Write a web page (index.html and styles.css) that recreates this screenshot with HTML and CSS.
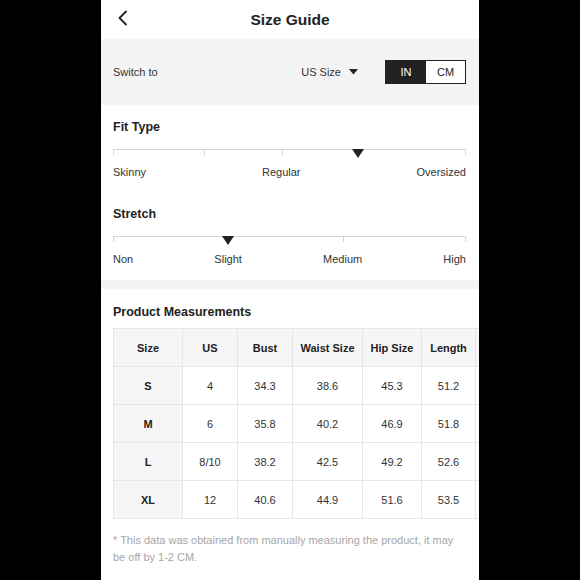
FILE: index.html
```html
<!DOCTYPE html>
<html>
<head>
<meta charset="utf-8">
<link rel="stylesheet" href="styles.css">
</head>
<body>
<div class="panel">
  <header class="topbar">
    <svg class="back" width="12" height="16" viewBox="0 0 12 16"><path d="M9 1.5 L2.5 8 L9 14.5" fill="none" stroke="#222" stroke-width="1.8" stroke-linecap="round" stroke-linejoin="round"/></svg>
    <h1 class="title">Size Guide</h1>
  </header>

  <section class="switchbar">
    <span class="switch-label">Switch to</span>
    <span class="sizesel">US Size <svg width="9" height="6" viewBox="0 0 9 6"><path d="M0 0 H9 L4.5 5.5 Z" fill="#222"/></svg></span>
    <div class="toggle">
      <span class="tog on">IN</span>
      <span class="tog">CM</span>
    </div>
  </section>

  <section class="fit">
    <h2 class="heading">Fit Type</h2>
    <div class="track">
      <i class="tick" style="left:0"></i>
      <i class="tick" style="left:91px"></i>
      <i class="tick" style="left:169px"></i>
      <i class="tick" style="right:0"></i>
      <b class="marker" style="left:245px"></b>
    </div>
    <div class="labels">
      <span>Skinny</span><span>Regular</span><span>Oversized</span>
    </div>

    <h2 class="heading stretch-h">Stretch</h2>
    <div class="track">
      <i class="tick" style="left:0"></i>
      <i class="tick" style="left:230px"></i>
      <i class="tick" style="right:0"></i>
      <b class="marker" style="left:115px"></b>
    </div>
    <div class="labels">
      <span>Non</span><span>Slight</span><span>Medium</span><span>High</span>
    </div>
  </section>

  <div class="sep"></div>

  <section class="measure">
    <h2 class="heading">Product Measurements</h2>
    <div class="tablewrap">
      <table class="sizes">
        <colgroup>
          <col class="c1"><col class="c2"><col class="c3"><col class="c4"><col class="c5"><col class="c6"><col class="c7">
        </colgroup>
        <thead>
          <tr><th>Size</th><th>US</th><th>Bust</th><th>Waist Size</th><th>Hip Size</th><th>Length</th><th></th></tr>
        </thead>
        <tbody>
          <tr><th>S</th><td>4</td><td>34.3</td><td>38.6</td><td>45.3</td><td>51.2</td><td></td></tr>
          <tr><th>M</th><td>6</td><td>35.8</td><td>40.2</td><td>46.9</td><td>51.8</td><td></td></tr>
          <tr><th>L</th><td>8/10</td><td>38.2</td><td>42.5</td><td>49.2</td><td>52.6</td><td></td></tr>
          <tr><th>XL</th><td>12</td><td>40.6</td><td>44.9</td><td>51.6</td><td>53.5</td><td></td></tr>
        </tbody>
      </table>
    </div>
    <p class="note">* This data was obtained from manually measuring the product, it may be off by 1-2 CM.</p>
  </section>
</div>
</body>
</html>
```

FILE: styles.css
```css
html, body {
  margin: 0;
  padding: 0;
  background: #000;
  height: 580px;
  overflow: hidden;
}
.panel {
  margin-left: 101px;
  width: 378px;
  height: 580px;
  background: #fff;
  overflow: hidden;
  font-family: "Liberation Sans", Arial, sans-serif;
  color: #222;
}
.topbar {
  height: 39px;
  display: flex;
  align-items: center;
  justify-content: center;
  position: relative;
}
.back {
  position: absolute;
  left: 16px;
  top: 10px;
}
.title {
  margin: 0;
  font-size: 15.5px;
  font-weight: bold;
  color: #222;
}
.switchbar {
  height: 66px;
  background: #f4f4f4;
  display: flex;
  align-items: center;
  padding: 0 13px 0 12px;
  font-size: 11px;
  color: #333;
}
.switch-label {
  flex: 1;
}
.sizesel {
  display: flex;
  align-items: center;
  gap: 8px;
  margin-right: 27px;
}
.toggle {
  display: flex;
  border: 1px solid #222;
  width: 79px;
  height: 22px;
}
.tog {
  flex: 1;
  display: flex;
  align-items: center;
  justify-content: center;
  background: #fff;
  color: #222;
}
.tog.on {
  flex: 0 0 40px;
  background: #222;
  color: #fff;
}
.fit {
  height: 175px;
  padding: 14px 13px 0 12px;
  box-sizing: border-box;
}
.heading {
  margin: 0;
  font-size: 12.5px;
  line-height: 16px;
  font-weight: bold;
  color: #222;
}
.stretch-h {
  margin-top: 26px;
}
.track {
  position: relative;
  margin-top: 14px;
  height: 0;
  border-top: 1px solid #d6d6d6;
}
.tick {
  position: absolute;
  top: 0;
  width: 1px;
  height: 5px;
  background: #d6d6d6;
}
.marker {
  position: absolute;
  top: -1px;
  width: 0;
  height: 0;
  margin-left: -6px;
  border-left: 6px solid transparent;
  border-right: 6px solid transparent;
  border-top: 9px solid #222;
}
.labels {
  display: flex;
  justify-content: space-between;
  margin-top: 15px;
  font-size: 11px;
  line-height: 15px;
  color: #333;
}
.sep {
  height: 9px;
  background: #f4f4f4;
}
.measure {
  padding: 15px 0 0 12px;
}
.tablewrap {
  margin-top: 8px;
  width: 380px;
}
.sizes {
  border-collapse: collapse;
  table-layout: fixed;
  width: 423px;
  font-size: 11px;
  color: #333;
}
.c1 { width: 69px; }
.c2 { width: 55px; }
.c3 { width: 55px; }
.c4 { width: 70px; }
.c5 { width: 59px; }
.c6 { width: 54px; }
.c7 { width: 61px; }
.sizes th, .sizes td {
  border: 1px solid #e6e6e6;
  height: 37px;
  padding: 0;
  text-align: center;
}
.sizes thead th {
  background: #f6f6f6;
  font-weight: bold;
  color: #222;
}
.sizes tbody th {
  background: #f6f6f6;
  font-weight: bold;
  color: #222;
}
.note {
  margin: 13px 13px 0 0;
  font-size: 11px;
  line-height: 17px;
  color: #a6a6a6;
}
```
